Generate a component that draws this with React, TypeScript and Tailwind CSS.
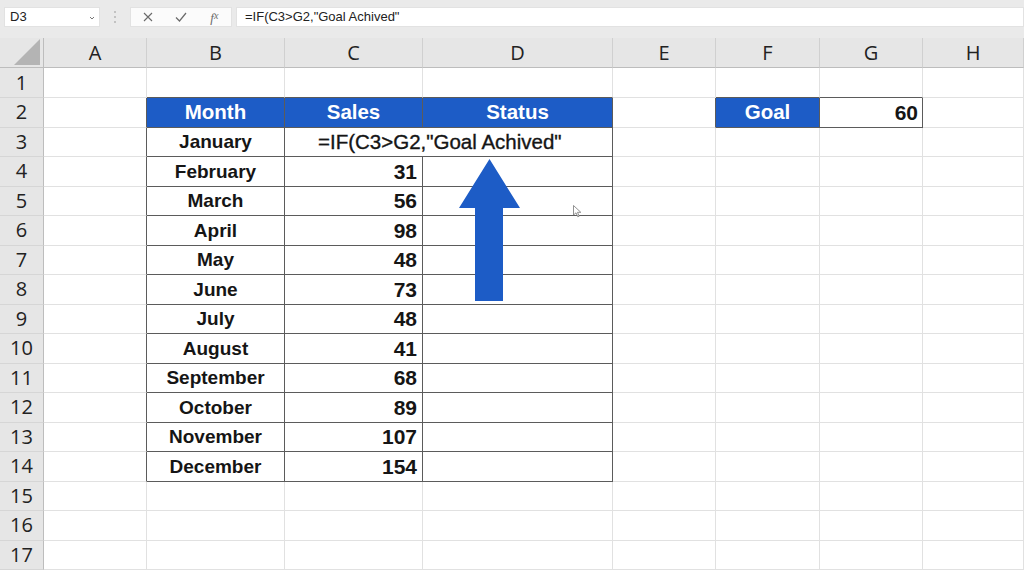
import React from "react";

const COLS = ["", "A", "B", "C", "D", "E", "F", "G", "H"];
const months = ["January", "February", "March", "April", "May", "June", "July", "August", "September", "October", "November", "December"];
const sales = ["", "31", "56", "98", "48", "73", "48", "41", "68", "89", "107", "154"];

function Cell({ r, c }: { r: number; c: number }) {
  const inTableRows = r >= 2 && r <= 14;
  let darkRight = false;
  let darkBottom = false;
  let blue = false;
  let content: React.ReactNode = null;
  let align = "justify-center";
  let size = "text-[19px]";

  if (inTableRows && c >= 1 && c <= 4) darkRight = true;
  if (r >= 1 && r <= 14 && c >= 2 && c <= 4) darkBottom = true;
  if (r === 2 && (c === 5 || c === 6 || c === 7)) darkRight = true;
  if ((r === 1 || r === 2) && (c === 6 || c === 7)) darkBottom = true;
  if (r === 2 && (c === 2 || c === 3 || c === 4 || c === 6)) blue = true;

  if (r === 2) {
    size = "text-[20.5px]";
    if (c === 2) content = "Month";
    if (c === 3) content = "Sales";
    if (c === 4) content = "Status";
    if (c === 6) content = "Goal";
    if (c === 7) {
      content = "60";
      align = "justify-end pr-[4px]";
      size = "text-[21px]";
    }
  } else if (r >= 3 && r <= 14) {
    if (c === 2) content = months[r - 3];
    if (c === 3) {
      content = sales[r - 3];
      align = "justify-end pr-[5px]";
      size = "text-[21px]";
    }
  }

  const rightCls = darkRight ? "border-r-[#5b5b5b]" : "border-r-[#e1e1e1]";
  const bottomCls = darkBottom ? "border-b-[#5b5b5b]" : "border-b-[#e1e1e1]";
  const bg = blue ? "bg-[#1d5cc6] text-white" : "bg-white text-[#151515]";

  return (
    <div className={`flex items-center ${align} border-r border-b ${rightCls} ${bottomCls} ${bg} font-bold ${size} leading-none`}>
      {content}
    </div>
  );
}

export default function App() {
  const rows = Array.from({ length: 17 }, (_, i) => i + 1);
  return (
    <div className="relative w-[1024px] h-[576px] overflow-hidden bg-white font-['Liberation_Sans',Arial,sans-serif]">
      {/* formula bar */}
      <div className="h-[38px] bg-[#eaeaea] flex items-start pt-[7px] pl-[4px]">
        <div className="w-[96px] h-[20px] bg-white flex items-center pl-[5px] pr-[4px] justify-between text-[13px] text-[#222] border border-[#e2e2e2]">
          <span>D3</span>
          <svg width="6" height="4" viewBox="0 0 6 4" className="mt-[2px]">
            <path d="M1 1 L3 3 L5 1" stroke="#777" strokeWidth="1" fill="none" />
          </svg>
        </div>
        <div className="w-[30px] h-[20px] flex flex-col items-center justify-center gap-[3px]">
          <div className="w-[2px] h-[2px] bg-[#b5b5b5] rounded-full" />
          <div className="w-[2px] h-[2px] bg-[#b5b5b5] rounded-full" />
          <div className="w-[2px] h-[2px] bg-[#b5b5b5] rounded-full" />
        </div>
        <div className="w-[102px] h-[20px] bg-[#fbfbfb] flex items-center border border-[#e2e2e2]">
          <div className="w-[33px] flex justify-center pl-[1px]">
            <svg width="10" height="10" viewBox="0 0 10 10">
              <path d="M1 1 L9 9 M9 1 L1 9" stroke="#6a6a6a" strokeWidth="1.1" />
            </svg>
          </div>
          <div className="w-[35px] flex justify-center">
            <svg width="12" height="10" viewBox="0 0 12 10">
              <path d="M1 5.5 L4.5 9 L11 1" stroke="#6a6a6a" strokeWidth="1.2" fill="none" />
            </svg>
          </div>
          <div className="w-[34px] flex justify-center font-['Liberation_Serif',serif] italic text-[13px] text-[#6a6a6a] leading-none">
            f<span className="text-[10px]">x</span>
          </div>
        </div>
        <div className="ml-[4px] flex-1 h-[20px] bg-white flex items-center pl-[8px] text-[13px] text-[#222] border border-[#e2e2e2]">
          =IF(C3&gt;G2,"Goal Achived"
        </div>
      </div>

      {/* sheet */}
      <div className="grid grid-cols-[44px_103px_138px_138px_190px_103px_104px_103px_1fr] grid-rows-[30px_30px_repeat(16,29.5px)]">
        <div className="bg-[#e6e6e6] border-r border-b border-[#bdbdbd] flex items-end justify-end pr-[3px] pb-[2px]">
          <svg width="26" height="26" viewBox="0 0 26 26">
            <polygon points="26,0 26,26 0,26" fill="#b4b4b4" />
          </svg>
        </div>
        {COLS.slice(1).map((l) => (
          <div
            key={l}
            className="bg-[#e6e6e6] border-r border-r-[#d0d0d0] border-b border-b-[#bdbdbd] flex items-center justify-center font-['Open_Sans','Noto_Sans',sans-serif] text-[20px] text-[#222] leading-none"
          >
            {l}
          </div>
        ))}

        {rows.map((r) => (
          <React.Fragment key={r}>
            <div className="bg-[#e6e6e6] border-r border-r-[#bdbdbd] border-b border-b-[#d6d6d6] flex items-center justify-center font-['Open_Sans','Noto_Sans',sans-serif] text-[20px] text-[#222] leading-none">
              {r}
            </div>
            {r === 3 ? (
              <>
                <Cell r={3} c={1} />
                <Cell r={3} c={2} />
                <div className="col-span-2 bg-white border-b border-b-[#5b5b5b] border-r border-r-[#5b5b5b] flex items-center justify-start pl-[33px] text-[20.5px] text-[#151515] leading-none whitespace-nowrap [-webkit-text-stroke:0.35px_#151515]">
                  =IF(C3&gt;G2,"Goal Achived"
                </div>
                {[5, 6, 7, 8].map((c) => (
                  <Cell key={c} r={3} c={c} />
                ))}
              </>
            ) : (
              [1, 2, 3, 4, 5, 6, 7, 8].map((c) => <Cell key={c} r={r} c={c} />)
            )}
          </React.Fragment>
        ))}
      </div>

      {/* arrow annotation */}
      <svg className="absolute left-[459px] top-[159px]" width="62" height="143" viewBox="0 0 62 143">
        <polygon points="30.5,0 61,49 44,49 44,142 16,142 16,49 0,49" fill="#1d5cc6" />
      </svg>

      {/* mouse cursor */}
      <svg className="absolute left-[573px] top-[205px]" width="9" height="13" viewBox="0 0 9 13">
        <path d="M0.5 0.5 L0.5 10 L3 7.8 L4.8 11.8 L6.2 11.2 L4.5 7.3 L7.8 7.3 Z" fill="#fff" stroke="#777" strokeWidth="0.8" />
      </svg>
    </div>
  );
}
